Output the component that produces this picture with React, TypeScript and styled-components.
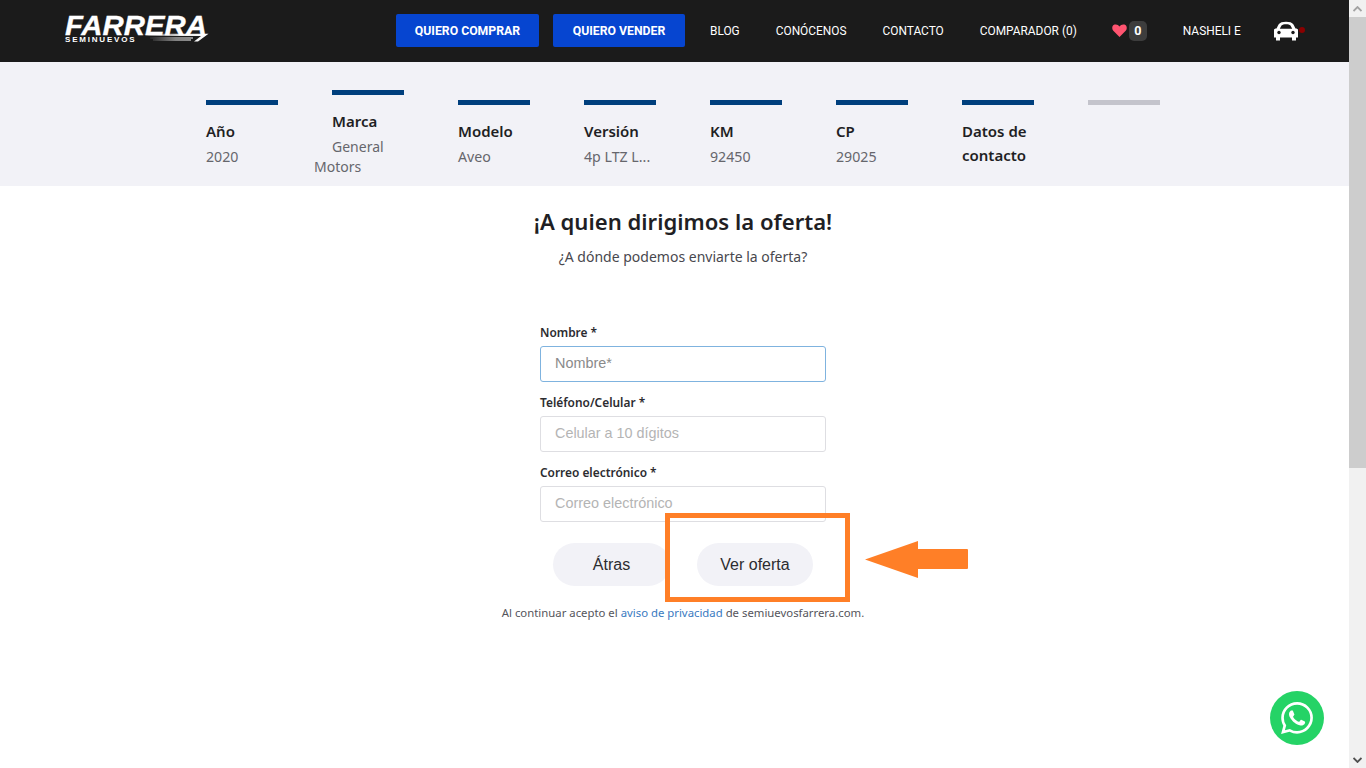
import React from "react";
import styled, { createGlobalStyle } from "styled-components";

const Global = createGlobalStyle`
  html, body { margin: 0; padding: 0; height: 100%; overflow: hidden; background: #fff; }
  #root { height: 100%; }
  * { box-sizing: border-box; }
`;

const Shell = styled.div`
  display: flex;
  width: 1366px;
  height: 768px;
  overflow: hidden;
`;

const Page = styled.div`
  position: relative;
  width: 1349px;
  height: 768px;
  background: #fff;
  font-family: "Noto Sans", sans-serif;
`;

const Scrollbar = styled.div`
  width: 17px;
  height: 768px;
  background: #f1f1f1;
  display: flex;
  flex-direction: column;
`;

const ScrollArrow = styled.div`
  height: 17px;
  display: flex;
  align-items: center;
  justify-content: center;
`;

const ScrollThumb = styled.div`
  height: 451px;
  background: #cdcdcd;
`;

const ScrollTrack = styled.div`
  flex: 1;
`;

const Nav = styled.header`
  height: 62px;
  background: #1b1b1b;
  display: flex;
  align-items: center;
  padding-left: 65px;
`;

const Logo = styled.svg`
  width: 145px;
  height: 30px;
  display: block;
  margin-top: -2px;
  overflow: visible;
`;

const NavItems = styled.nav`
  display: flex;
  align-items: center;
  margin-left: 186px;
  font-family: Roboto, sans-serif;
`;

const CtaButton = styled.a`
  height: 33px;
  background: #0645d0;
  border-radius: 2px;
  color: #fff;
  font-size: 12.25px;
  font-weight: 700;
  display: flex;
  align-items: center;
  justify-content: center;
  width: ${(p: { $w: number }) => p.$w}px;
  margin-right: 14px;
  margin-top: -1px;
`;

const NavLink = styled.a`
  color: #fff;
  font-size: 11.9px;
  white-space: nowrap;
  margin-left: ${(p: { $ml: number }) => p.$ml}px;
  margin-top: -1px;
`;

const Heart = styled.svg`
  width: 15px;
  height: 13px;
  display: block;
  margin-left: 35px;
  margin-top: -2px;
`;

const CountBadge = styled.span`
  width: 18px;
  height: 20px;
  margin-left: 2px;
  border-radius: 5px;
  background: #3d3d3d;
  color: #fff;
  font-size: 12.5px;
  font-weight: 700;
  display: flex;
  align-items: center;
  justify-content: center;
  margin-top: -1px;
`;

const CarWrap = styled.svg`
  width: 32px;
  height: 20px;
  display: block;
  margin-left: 32px;
  margin-top: -1px;
`;

const Steps = styled.section`
  height: 124px;
  background: #f2f2f7;
  display: flex;
  padding-left: 206px;
`;

const Step = styled.div<{ $raised?: boolean }>`
  width: 126px;
  padding-top: ${(p) => (p.$raised ? 28 : 38)}px;
`;

const StepBar = styled.div<{ $pending?: boolean }>`
  width: 72px;
  height: 5px;
  background: ${(p) => (p.$pending ? "#c4c4cc" : "#003f7d")};
`;

const StepTitle = styled.div`
  margin-top: 14px;
  width: 80px;
  font-size: 15px;
  line-height: 24px;
  font-weight: 600;
  color: #1f1f24;
`;

const StepValue = styled.div`
  margin-top: 4px;
  font-size: 14.2px;
  line-height: 20px;
  color: #66666c;
  white-space: nowrap;
`;

const StepValueWrapped = styled(StepValue)`
  margin-left: -18px;
  text-indent: 18px;
  white-space: normal;
  width: 90px;
  font-size: 14px;
`;

const Main = styled.main`
  display: flex;
  flex-direction: column;
  align-items: center;
  padding-left: 17px;
`;

const Heading = styled.h1`
  margin: 20px 0 0;
  font-size: 22.1px;
  line-height: 30px;
  font-weight: 600;
  color: #1f1f24;
`;

const Sub = styled.p`
  margin: 11px 0 0;
  font-size: 14px;
  line-height: 20px;
  color: #48484e;
`;

const Form = styled.form`
  width: 286px;
  margin-top: 56px;
  display: flex;
  flex-direction: column;
`;

const Label = styled.label`
  font-size: 11.9px;
  line-height: 18px;
  font-weight: 600;
  color: #2c2c30;
  margin-bottom: 5px;
`;

const Input = styled.input<{ $focus?: boolean }>`
  width: 286px;
  height: 36px;
  border: 1px solid ${(p) => (p.$focus ? "#7fb3df" : "#dedee2")};
  border-radius: 3px;
  padding: 0 14px 2px;
  margin-bottom: 11px;
  font-family: "Liberation Sans", sans-serif;
  font-size: 14.4px;
  outline: none;
  &::placeholder { color: ${(p) => (p.$focus ? "#8a8a8a" : "#b4b4b4")}; opacity: 1; }
`;

const Buttons = styled.div`
  display: flex;
  margin-top: 10px;
  margin-left: 13px;
  gap: 27px;
`;

const Pill = styled.button`
  width: ${(p: { $w: number }) => p.$w}px;
  height: 43px;
  border: none;
  border-radius: 22px;
  background: #f2f2f7;
  color: #2c2c30;
  font-family: "Liberation Sans", sans-serif;
  font-size: 16px;
  padding: 0;
`;

const Legal = styled.p`
  margin: 18px 0 0;
  font-size: 11.35px;
  line-height: 18px;
  color: #55555b;
`;

const LegalLink = styled.a`
  color: #3a7abf;
`;

const Highlight = styled.div`
  position: absolute;
  left: 665px;
  top: 513px;
  width: 185px;
  height: 89px;
  border: 5px solid #ff7f27;
`;

const Arrow = styled.svg`
  position: absolute;
  left: 864px;
  top: 540px;
  width: 105px;
  height: 40px;
`;

const WhatsApp = styled.a`
  position: absolute;
  left: 1270px;
  top: 691px;
  width: 54px;
  height: 54px;
  border-radius: 50%;
  background: #25d366;
  display: flex;
  align-items: center;
  justify-content: center;
`;

const steps = [
  { t: "Año", v: "2020" },
  { t: "Marca", v: "General Motors", raised: true },
  { t: "Modelo", v: "Aveo" },
  { t: "Versión", v: "4p LTZ L..." },
  { t: "KM", v: "92450" },
  { t: "CP", v: "29025" },
  { t: "Datos de contacto" },
];

export default function App() {
  return (
    <Shell>
      <Global />
      <Page>
        <Nav>
          <Logo viewBox="0 0 145 30">
            <defs>
              <linearGradient id="swoosh" x1="0" x2="1" y1="0" y2="0">
                <stop offset="0" stopColor="#fff" stopOpacity="0.1" />
                <stop offset="0.6" stopColor="#fff" stopOpacity="0.9" />
                <stop offset="1" stopColor="#fff" />
              </linearGradient>
            </defs>
            <text x="0" y="19.500" fontFamily="Liberation Sans" fontWeight="700" fontStyle="italic" fontSize="28" fill="#fff" stroke="#fff" strokeWidth=".3" textLength="142" lengthAdjust="spacingAndGlyphs">FARRERA</text>
            <text x="0" y="26.500" fontFamily="Liberation Sans" fontWeight="700" fontSize="8" fill="#fff" letterSpacing="1.800">SEMINUEVOS</text>
            <path d="M76 18.800H143.500L133 26.500H129L136 21H84Z" fill="url(#swoosh)" />
            <path d="M85 23H128M88 25H126" stroke="url(#swoosh)" strokeWidth="1" />
          </Logo>
          <NavItems>
            <CtaButton $w={143}>QUIERO COMPRAR</CtaButton>
            <CtaButton $w={132}>QUIERO VENDER</CtaButton>
            <NavLink $ml={11}>BLOG</NavLink>
            <NavLink $ml={36}>CONÓCENOS</NavLink>
            <NavLink $ml={36}>CONTACTO</NavLink>
            <NavLink $ml={36}>COMPARADOR (0)</NavLink>
            <Heart viewBox="0 0 24 21">
              <path d="M12 21 2 11C-1 7.500 0 2.500 4 1 7 0 10 1 12 4 14 1 17 0 20 1 24 2.500 25 7.500 22 11Z" fill="#ff5470" />
            </Heart>
            <CountBadge>0</CountBadge>
            <NavLink $ml={36}>NASHELI E</NavLink>
            <CarWrap viewBox="0 0 32 20">
              <path d="M1 9C1 8 2 7.500 3.500 7.500L5.500 3.500C7 1.500 9.500 .8 13 .8S19 1.500 20.500 3.500L22.500 7.500C24 7.500 25 8 25 9V16.500H23V19.500H19V16.500H7V19.500H3V16.500H1Z" fill="#fff" />
              <path d="M6.800 7.800 8.500 4.500C9.500 3.500 11 3.200 13 3.200S16.500 3.500 17.500 4.500L19.200 7.800Z" fill="#1b1b1b" />
              <circle cx="6" cy="11.500" r="1.700" fill="#1b1b1b" />
              <circle cx="20" cy="11.500" r="1.700" fill="#1b1b1b" />
              <circle cx="29" cy="9" r="3" fill="#8a0000" />
            </CarWrap>
          </NavItems>
        </Nav>
        <Steps>
          {steps.map((s) => (
            <Step key={s.t} $raised={s.raised}>
              <StepBar />
              <StepTitle>{s.t}</StepTitle>
              {s.v && (s.raised ? <StepValueWrapped>{s.v}</StepValueWrapped> : <StepValue>{s.v}</StepValue>)}
            </Step>
          ))}
          <Step>
            <StepBar $pending />
          </Step>
        </Steps>
        <Main>
          <Heading>¡A quien dirigimos la oferta!</Heading>
          <Sub>¿A dónde podemos enviarte la oferta?</Sub>
          <Form>
            <Label>Nombre *</Label>
            <Input $focus placeholder="Nombre*" />
            <Label>Teléfono/Celular *</Label>
            <Input placeholder="Celular a 10 dígitos" />
            <Label>Correo electrónico *</Label>
            <Input placeholder="Correo electrónico" />
            <Buttons>
              <Pill type="button" $w={117}>Átras</Pill>
              <Pill type="button" $w={116}>Ver oferta</Pill>
            </Buttons>
          </Form>
          <Legal>
            Al continuar acepto el <LegalLink>aviso de privacidad</LegalLink> de semiuevosfarrera.com.
          </Legal>
        </Main>
        <Highlight />
        <Arrow viewBox="0 0 105 40">
          <path d="M1 19.500 54 1V9H103Q104 9 104 10V28Q104 29 103 29H54V38Z" fill="#ff7f27" />
        </Arrow>
        <WhatsApp>
          <svg width="32" height="32" viewBox="0 0 24 24" fill="#fff">
            <path d="M17.472 14.382c-.297-.149-1.758-.867-2.03-.967-.273-.099-.471-.148-.67.15-.197.297-.767.966-.94 1.164-.173.199-.347.223-.644.075-.297-.15-1.255-.463-2.39-1.475-.883-.788-1.48-1.761-1.653-2.059-.173-.297-.018-.458.13-.606.134-.133.298-.347.446-.52.149-.174.198-.298.298-.497.099-.198.05-.371-.025-.52-.075-.149-.669-1.612-.916-2.207-.242-.579-.487-.5-.669-.51-.173-.008-.371-.01-.57-.01-.198 0-.52.074-.792.372-.272.297-1.04 1.016-1.04 2.479 0 1.462 1.065 2.875 1.213 3.074.149.198 2.096 3.2 5.077 4.487.709.306 1.262.489 1.694.625.712.227 1.36.195 1.871.118.571-.085 1.758-.719 2.006-1.413.248-.694.248-1.289.173-1.413-.074-.124-.272-.198-.57-.347m-5.421 7.403h-.004a9.87 9.87 0 01-5.031-1.378l-.361-.214-3.741.982.998-3.648-.235-.374a9.86 9.86 0 01-1.51-5.26c.001-5.45 4.436-9.884 9.888-9.884 2.64 0 5.122 1.03 6.988 2.898a9.825 9.825 0 012.893 6.994c-.003 5.45-4.437 9.884-9.885 9.884m8.413-18.297A11.815 11.815 0 0012.05 0C5.495 0 .16 5.335.157 11.892c0 2.096.547 4.142 1.588 5.945L.057 24l6.305-1.654a11.882 11.882 0 005.683 1.448h.005c6.554 0 11.89-5.335 11.893-11.893a11.821 11.821 0 00-3.48-8.413Z" />
          </svg>
        </WhatsApp>
      </Page>
      <Scrollbar>
        <ScrollArrow>
          <svg width="9" height="6" viewBox="0 0 9 6"><path d="M.5 5 4.500 1 8.500 5" fill="none" stroke="#a3a3a3" strokeWidth="1.800" /></svg>
        </ScrollArrow>
        <ScrollThumb />
        <ScrollTrack />
        <ScrollArrow>
          <svg width="9" height="6" viewBox="0 0 9 6"><path d="M.5 1 4.500 5 8.500 1" fill="none" stroke="#505050" strokeWidth="1.800" /></svg>
        </ScrollArrow>
      </Scrollbar>
    </Shell>
  );
}
